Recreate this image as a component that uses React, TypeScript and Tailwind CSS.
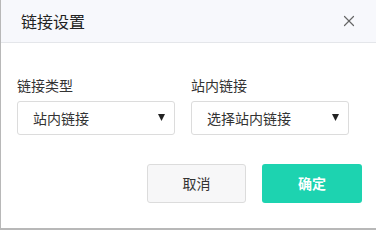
import { X } from "lucide-react";

const FONT = { fontFamily: '"Noto Sans CJK SC", "Liberation Sans", sans-serif' };

function SelectBox({ text }: { text: string }) {
  return (
    <div className="flex h-[34px] items-center justify-between rounded-[3px] border border-[#dcdcdc] bg-white pl-[15px] pr-[9px] text-[14px] text-[#333]">
      <span>{text}</span>
      <svg width="7" height="7" viewBox="0 0 7 7" className="mt-[-2px]">
        <path d="M0 0 H7 L3.5 7 Z" fill="#222" />
      </svg>
    </div>
  );
}

export default function App() {
  return (
    <div className="h-[230px] w-[376px] overflow-hidden bg-white" style={FONT}>
      <div className="flex h-[230px] flex-col border-b-2 border-l border-[#b8b8b8]">
        {/* Header */}
        <div className="flex h-[43px] items-center justify-between border-b border-[#e4e6ea] bg-[#f7f8fc] pl-[20px] pr-[18px]">
          <h1 className="text-[16px] text-[#222]">链接设置</h1>
          <X className="h-[18px] w-[18px] text-[#666]" strokeWidth={1.6} />
        </div>

        {/* Body */}
        <div className="grid grid-cols-2 gap-x-[16px] px-[16px] pt-[33px] pr-[27px]">
          <div>
            <p className="mb-[7px] text-[14px] leading-[18px] text-[#333]">链接类型</p>
            <SelectBox text="站内链接" />
          </div>
          <div>
            <p className="mb-[7px] text-[14px] leading-[18px] text-[#333]">站内链接</p>
            <SelectBox text="选择站内链接" />
          </div>
        </div>

        {/* Footer */}
        <div className="flex justify-end gap-[16px] pr-[14px] pt-[29px]">
          <button className="h-[39px] w-[99px] rounded-[3px] border border-[#dcdcdc] bg-[#f7f7f8] text-[14px] text-[#333]">
            取消
          </button>
          <button className="h-[39px] w-[100px] rounded-[3px] bg-[#1dd3b0] text-[14px] font-bold text-white">
            确定
          </button>
        </div>
      </div>
    </div>
  );
}
